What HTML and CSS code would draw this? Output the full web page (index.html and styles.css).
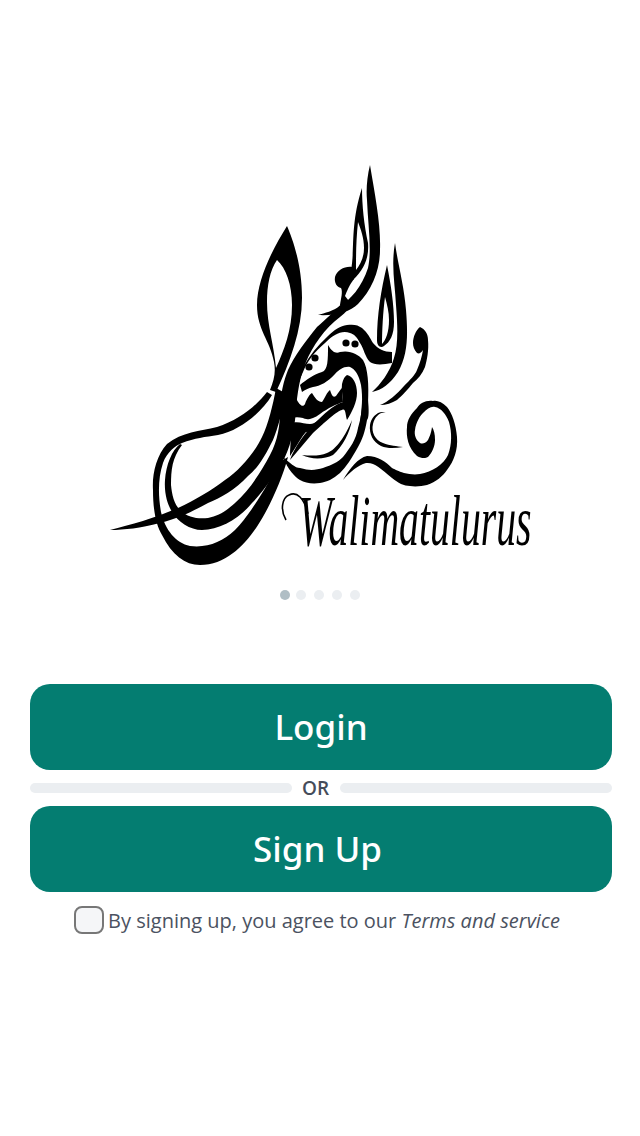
FILE: index.html
```html
<!DOCTYPE html>
<html lang="en">
<head>
    <meta charset="UTF-8">
    <meta name="viewport" content="width=device-width, initial-scale=1.0">
    <title>Walimatulurus</title>
    <link rel="stylesheet" href="styles.css">
</head>
<body>

    <div class="page">
        <!-- logo: coordinates in the viewBox are page pixels -->
        <svg class="logo" viewBox="100 150 440 430" role="img" aria-label="Walimatulurus">
            <!-- tall loop -->
            <path fill-rule="evenodd" d="M287 226 C293 240 302 265 302 298 C302 330 290 362 276 392 L270 390 C274 380 276 372 274 362 C270 340 257 330 257 305 C257 280 272 250 287 226 Z M277 260 C270 270 267 285 267 302 C267 325 274 345 276 368 C284 350 292 330 292 305 C292 285 286 268 277 260 Z"/>
            <!-- outer bowl -->
            <path d="M267 392 C258 404 240 420 217 427 C200 431 182 432 167 444 C156 456 152 475 153 490 C153 510 156 525 162 535 C172 555 185 565 200 565 C226 565 245 545 258 525 C268 510 282 480 288 457 L278 463 C270 482 250 515 235 530 C222 542 208 548 190 546 C176 543 165 530 161 512 C158 495 158 478 163 463 C167 452 175 446 182 443 C195 438 205 437 218 435 C240 431 262 412 272 395 Z"/>
            <!-- spear -->
            <path d="M110 530 C130 525 155 518 178 508 C195 500 212 490 225 480 C240 470 255 452 262 437 C268 425 273 405 276 388 L285 393 C283 410 278 428 273 440 C265 456 258 468 248 476 C235 490 220 498 208 503 C195 510 180 518 160 523 C140 528 125 530 110 530 Z"/>
            <!-- middle ribbon, runs up to the blob -->
            <path d="M180 444 C172 450 166 465 165 480 C164 495 168 505 172 512 C178 522 190 530 202 530 C220 530 240 518 252 503 C265 490 278 470 285 457 C292 442 295 425 296 410 C297 395 300 375 306 362 C312 347 325 328 340 317 C346 312 350 308 352 303 L345 300 C338 308 325 320 317 327 C305 342 295 355 288 370 C284 380 280 395 280 410 C280 425 278 440 270 455 C262 470 250 490 235 503 C225 512 218 516 208 518 C198 519 188 518 180 510 C174 504 172 495 171 485 C171 470 172 458 182 445 Z"/>
            <!-- spires -->
            <path d="M370 165 C375 195 381 225 380 250 C380 270 372 290 358 304 C350 312 335 316 318 315 C325 313 333 311 340 306 C350 300 362 287 368 268 C372 250 368 225 367 200 C366 190 367 177 370 165 Z"/>
            <path d="M335 277 C337 270 345 266 352 267 L354 279 C351 283 349 286 345 296 L352 305 L340 305 C341 298 343 292 341 288 C337 287 334 283 335 277 Z"/>
            <path fill-rule="evenodd" d="M362 188 C362 205 364 225 368 243 C369 255 366 268 353 280 L351 270 C355 250 350 225 362 188 Z M358 222 C356 240 356 258 356 270 C360 265 364 258 364 248 C364 238 361 230 358 222 Z"/>
            <path d="M395 243 C398 265 404 285 406 310 C408 335 408 355 398 372 C390 384 382 390 372 392 C380 385 390 372 394 358 C398 345 398 330 396 305 C395 285 391 265 395 243 Z"/>
            <path fill-rule="evenodd" d="M387 265 C381 290 377 315 377 340 C377 347 381 348 384 346 C390 342 394 335 394 322 C394 305 391 285 387 265 Z M385 297 C383 312 382 330 382 344 C386 340 389 332 389 320 C389 312 387 304 385 297 Z"/>
            <!-- arch under the spires -->
            <path d="M290 397 C294 385 298 375 303 367 C310 355 318 345 327 337 C335 329 340 326 347 325 C354 324 358 325 362 328 C368 333 370 338 373 343 C378 349 384 352 392 352 L392 363 C382 365 374 365 370 362 C365 357 364 349 360 343 C357 337 354 334 350 333 C345 331 340 332 335 335 C330 338 328 340 325 343 C314 352 307 362 303 372 C299 380 297 388 295 397 Z"/>
            <!-- right waw -->
            <path d="M420 327 C425 329 428 334 428 340 C429 350 427 360 425 367 C422 374 418 379 413 383 C408 389 402 396 397 400 C392 403 386 405 380 405 C388 402 397 394 404 386 C410 380 415 375 417 370 C420 363 422 356 423 350 C421 353 419 354 417 353 C414 350 413 346 413 343 C413 337 416 330 420 327 Z"/>
            <!-- dots -->
            <circle cx="346" cy="343" r="3.6"/>
            <circle cx="355" cy="344" r="3.6"/>
            <circle cx="315" cy="358" r="3.6"/>
            <circle cx="309" cy="367" r="3.6"/>
            <!-- centre letters -->
            <path d="M300 385 C306 380 314 374 322 372 C328 370 328 360 328 345 C332 352 336 354 340 352 C350 350 358 354 363 360 C368 368 369 385 368 403 C367 412 364 418 360 422 C362 410 363 398 361 385 C359 375 355 369 350 367 C344 366 339 370 335 374 C328 382 320 386 313 387 C308 388 305 390 302 392 Z"/>
            <path d="M347 375 C353 376 357 384 357 393 C357 402 352 412 347 420 C345 414 346 408 342 410 C337 411 325 422 313 433 C305 442 297 452 290 460 C294 448 305 432 318 420 C328 410 336 404 343 402 C343 396 341 390 342 384 C343 379 345 376 347 375 Z"/>
            <path d="M282 420 C287 412 292 402 296 398 C299 405 303 408 305 404 C307 398 310 394 312 393 C315 398 318 402 322 402 C325 398 327 392 330 390 C332 396 333 398 336 396 C339 392 340 390 342 388 L343 402 C337 404 328 408 320 414 C312 420 306 420 303 418 C296 416 290 418 282 420 Z"/>
            <path d="M290 424 C296 420 304 424 310 424 C316 424 320 418 328 412 C322 424 314 432 306 432 C302 436 298 444 290 456 C290 446 292 434 290 424 Z"/>
            <!-- bowl under the centre letters -->
            <path d="M283 457 C290 463 295 468 300 468 C310 471 316 470 323 468 C332 465 338 462 343 457 C350 448 356 440 358 428 C361 418 362 410 362 400 L368 400 C369 410 369 418 367 420 C365 432 362 440 358 447 C352 458 346 467 340 473 C333 479 327 482 320 483 C312 484 305 483 300 480 C295 477 288 470 283 457 Z"/>
            <path d="M302 455 C312 456 320 456 327 453 C336 450 346 435 352 420 C350 432 343 446 333 455 C325 459 312 460 302 455 Z"/>
            <!-- wave and big curl -->
            <path d="M343 480 C350 472 358 465 366 463 C374 462 380 468 392 478 C398 483 404 486 410 486 C416 487 422 486 427 485 C436 482 443 476 447 470 C454 461 458 450 457 437 C456 424 452 413 447 407 C442 402 437 400 433 401 C426 400 420 403 417 408 C411 414 407 420 407 427 C406 436 408 448 417 456 C422 459 426 458 428 457 C432 453 435 446 435 440 C435 434 434 430 432 427 C431 434 429 438 428 440 C425 444 422 444 420 443 C416 440 414 435 415 430 C416 422 420 416 423 413 C427 409 431 406 435 407 C441 408 446 414 449 422 C452 432 452 445 448 455 C444 464 432 472 420 474 C414 475 409 474 404 473 C398 471 396 470 392 468 C386 462 378 456 367 456 C358 458 350 468 343 480 Z"/>
            <!-- small curl -->
            <path d="M387 413 C381 411 375 416 373 424 C371 432 375 440 383 443 C390 446 397 446 403 447 C396 448 388 449 381 446 C373 442 369 434 370 425 C371 417 379 409 387 413 Z"/>
            <!-- swash on the W -->
            <path class="swash" d="M286 520 C280 510 282 498 289 495 C297 491 304 498 308 514"/>
            <text class="logo-name" transform="translate(299 545) scale(0.552 1)">Walimatulurus</text>
        </svg>

        <div class="dots">
            <span class="dot dot-active"></span>
            <span class="dot"></span>
            <span class="dot"></span>
            <span class="dot"></span>
            <span class="dot"></span>
        </div>

        <div class="actions">
            <button class="btn">Login</button>
            <div class="divider">
                <span class="line line-left"></span>
                <span class="or">OR</span>
                <span class="line"></span>
            </div>
            <button class="btn btn-signup">Sign Up</button>
            <label class="terms">
                <input type="checkbox" class="terms-check">
                <span>By signing up, you agree to our <em>Terms and service</em></span>
            </label>
        </div>
    </div>

</body>
</html>
```

FILE: styles.css
```css
body {
    margin: 0;
    background-color: #ffffff;
    font-family: "Open Sans", "Noto Sans", sans-serif;
}

.page {
    display: flex;
    flex-direction: column;
    min-height: 1136px;
    padding-top: 150px;
    box-sizing: border-box;
}

.logo {
    display: block;
    width: 440px;
    height: 430px;
    margin: 0 auto;
    overflow: visible;
}

.swash {
    fill: none;
    stroke: #000000;
    stroke-width: 1.6;
}

.logo-name {
    font-family: "Liberation Serif", serif;
    font-style: italic;
    font-size: 72px;
    fill: #000000;
}

.dots {
    display: flex;
    justify-content: center;
    align-items: center;
    gap: 8px;
    margin-top: 10px;
}

.dot {
    width: 10px;
    height: 10px;
    border-radius: 50%;
    background-color: #ebeef1;
}

.dot-active {
    background-color: #b0bec5;
    margin-right: -2px;
}

.actions {
    display: flex;
    flex-direction: column;
    margin-top: 84px;
    padding: 0 28px 0 30px;
}

.btn {
    height: 86px;
    padding-bottom: 3px;
    border: none;
    border-radius: 20px;
    background-color: #047d71;
    color: #ffffff;
    font-family: "Noto Sans", sans-serif;
    font-size: 35px;
    font-weight: 500;
    cursor: pointer;
}

.btn-signup {
    padding-right: 13px;
}

.divider {
    display: flex;
    align-items: center;
    height: 36px;
    gap: 10px;
}

.line {
    flex: 1;
    height: 10px;
    border-radius: 5px;
    background-color: #ebeef1;
}

.line-left {
    flex: none;
    width: 262px;
}

.or {
    width: 28px;
    color: #454c5a;
    font-size: 19px;
    font-weight: 600;
    white-space: nowrap;
}

.terms {
    display: flex;
    justify-content: center;
    align-items: center;
    gap: 4px;
    margin-top: 14px;
    padding-right: 8px;
    color: #4b5261;
    font-size: 20px;
}

.terms-check {
    appearance: none;
    width: 30px;
    height: 28px;
    margin: 0;
    border: 2px solid #777777;
    border-radius: 8px;
    background-color: #f5f6f8;
}
```
